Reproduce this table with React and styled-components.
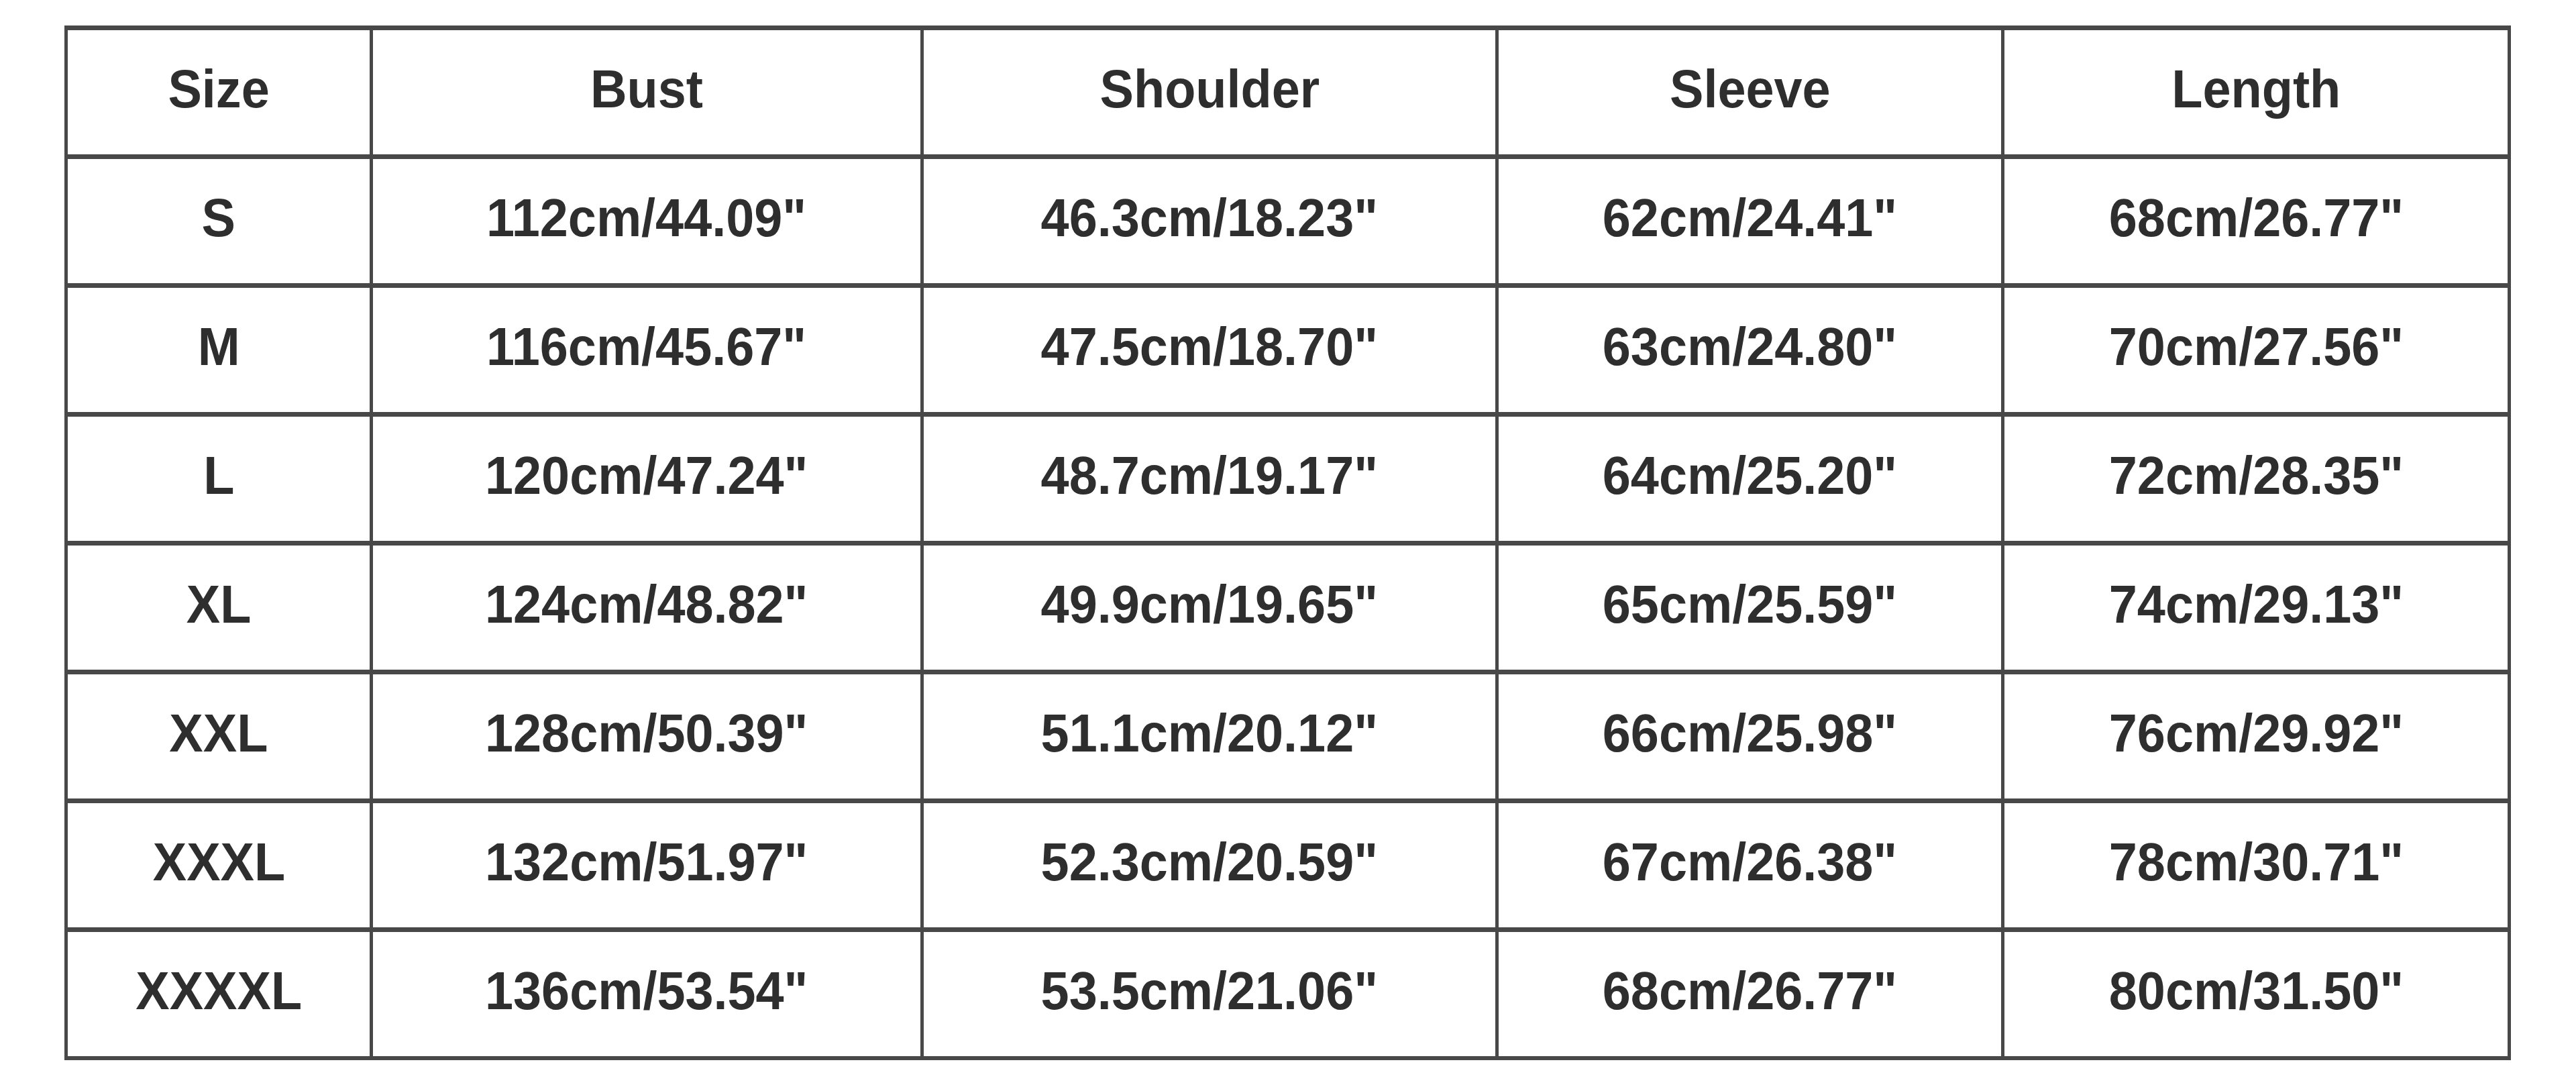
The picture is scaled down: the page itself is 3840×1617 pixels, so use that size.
import React from "react";
import styled, { createGlobalStyle } from "styled-components";

const Global = createGlobalStyle`
  html, body {
    margin: 0;
    padding: 0;
    background: #ffffff;
  }
  body {
    font-family: "Liberation Sans", Arial, sans-serif;
  }
`;

const Page = styled.div`
  width: 3840px;
  min-height: 1617px;
  padding: 38px 0 0 96px;
  box-sizing: border-box;
  background: #ffffff;
`;

const Grid = styled.div`
  display: grid;
  width: max-content;
  grid-template-columns: 450px 816px 852px 749px 750px;
  grid-auto-rows: 185px;
  column-gap: 5px;
  row-gap: 7px;
  padding: 7px 5px 6px 5px;
  background: #484848;
`;

const Cell = styled.div`
  background: #ffffff;
  display: flex;
  align-items: center;
  justify-content: center;
  padding-bottom: 10px;
  box-sizing: border-box;
`;

const Label = styled.span`
  display: inline-block;
  font-family: "Liberation Sans", Arial, sans-serif;
  font-weight: 700;
  font-size: 80px;
  line-height: 1;
  color: #2e2e2e;
  white-space: nowrap;
  transform: scaleX(0.945);
`;

const headers = ["Size", "Bust", "Shoulder", "Sleeve", "Length"];

const rows = [
  ["S", "112cm/44.09\"", "46.3cm/18.23\"", "62cm/24.41\"", "68cm/26.77\""],
  ["M", "116cm/45.67\"", "47.5cm/18.70\"", "63cm/24.80\"", "70cm/27.56\""],
  ["L", "120cm/47.24\"", "48.7cm/19.17\"", "64cm/25.20\"", "72cm/28.35\""],
  ["XL", "124cm/48.82\"", "49.9cm/19.65\"", "65cm/25.59\"", "74cm/29.13\""],
  ["XXL", "128cm/50.39\"", "51.1cm/20.12\"", "66cm/25.98\"", "76cm/29.92\""],
  ["XXXL", "132cm/51.97\"", "52.3cm/20.59\"", "67cm/26.38\"", "78cm/30.71\""],
  ["XXXXL", "136cm/53.54\"", "53.5cm/21.06\"", "68cm/26.77\"", "80cm/31.50\""],
];

export default function App() {
  return (
    <>
      <Global />
      <Page>
        <Grid>
          {headers.map((h) => (
            <Cell key={h}>
              <Label>{h}</Label>
            </Cell>
          ))}
          {rows.map((r) =>
            r.map((v, i) => (
              <Cell key={r[0] + i}>
                <Label>{v}</Label>
              </Cell>
            ))
          )}
        </Grid>
      </Page>
    </>
  );
}
